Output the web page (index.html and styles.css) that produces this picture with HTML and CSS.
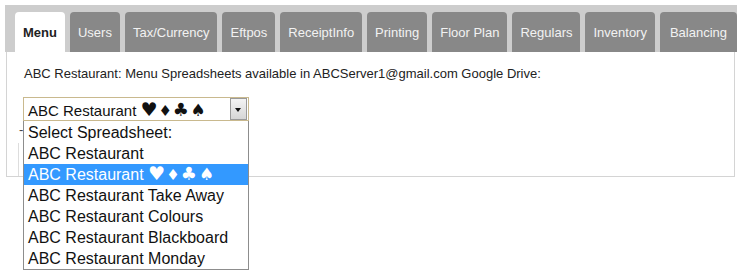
FILE: index.html
```html
<html>
<head>
  <meta charset="utf-8">
  <link rel="stylesheet" href="styles.css">
</head>
<body>

<div class="tabs">
  <div class="tab-bar">
    <span class="tab active">Menu</span>
    <span class="tab">Users</span>
    <span class="tab">Tax/Currency</span>
    <span class="tab">Eftpos</span>
    <span class="tab">ReceiptInfo</span>
    <span class="tab">Printing</span>
    <span class="tab">Floor Plan</span>
    <span class="tab">Regulars</span>
    <span class="tab">Inventory</span>
    <span class="tab">Balancing</span>
  </div>

  <div class="panel">
    <p class="intro">ABC Restaurant: Menu Spreadsheets available in ABCServer1@gmail.com Google Drive:</p>

    <div class="select-wrap">
      <div class="select-box">
        <span class="select-value">ABC Restaurant <span class="suits"><span class="heart">&#9829;</span> <span class="diamond">&#9830;</span> <span class="club">&#9827;</span> <span class="spade">&#9824;</span></span></span>
        <span class="select-arrow"></span>
      </div>

      <!-- the open list lies over the rest of the panel -->
      <ul class="select-list">
        <li>Select Spreadsheet:</li>
        <li>ABC Restaurant</li>
        <li class="picked">ABC Restaurant <span class="suits"><span class="heart">&#9829;</span> <span class="diamond">&#9830;</span> <span class="club">&#9827;</span> <span class="spade">&#9824;</span></span></li>
        <li>ABC Restaurant Take Away</li>
        <li>ABC Restaurant Colours</li>
        <li>ABC Restaurant Blackboard</li>
        <li>ABC Restaurant Monday</li>
      </ul>
    </div>

    <div class="under-row">
      <span class="under-mark">-</span>
      <span class="under-btn"></span>
    </div>
  </div>
</div>

</body>
</html>
```

FILE: styles.css
```css
body {
  margin: 0;
  background: #fff;
  font-family: "Liberation Sans", Arial, sans-serif;
  font-size: 13px;
  color: #222;
}

.tabs {
  width: 732px;
  margin: 5px 0 0 5px;
}

.tab-bar {
  display: flex;
  gap: 5px;
  height: 47px;
  padding: 7px 0 0 10px;
  box-sizing: border-box;
  background: #cdcdcd;
}

.tab {
  display: flex;
  align-items: center;
  flex-shrink: 0;
  padding: 0 8px;
  white-space: nowrap;
  background: #888;
  color: #f2f2f2;
  border-radius: 4px 4px 0 0;
}

.tab:last-child {
  padding: 0 10px;
}

.tab.active {
  background: #fff;
  color: #222;
  font-weight: bold;
}

.panel {
  height: 125px;
  margin: 0 2px 0 1px;
  padding: 14px 17px 0 17px;
  box-sizing: border-box;
  border: 1px solid #d4d4d4;
  border-top: 0;
  background: #fff;
}

.intro {
  margin: 0;
  line-height: 15px;
}

.select-wrap {
  position: relative;
  width: 226px;
  margin: 16px 0 0 -1px;
  z-index: 2;
}

.select-box {
  display: flex;
  align-items: center;
  justify-content: space-between;
  height: 24px;
  padding: 0 1px 0 4px;
  box-sizing: border-box;
  border: 1px solid #c9b98e;
  background: #fff;
  font-size: 15px;
  color: #111;
}

.select-arrow {
  position: relative;
  width: 15px;
  height: 20px;
  border: 1px solid #9a9a9a;
  background: linear-gradient(#f4f4f4, #d6d6d6);
}

.select-arrow::after {
  content: "";
  position: absolute;
  left: 4px;
  top: 9px;
  border-left: 3.5px solid transparent;
  border-right: 3.5px solid transparent;
  border-top: 4px solid #111;
}

.suits {
  font-family: "DejaVu Sans", sans-serif;
  line-height: 1;
  word-spacing: -4px;
}

.heart { font-size: 19px; }
.diamond { font-size: 15px; }
.club { font-size: 18px; }
.spade { font-size: 17px; margin-left: 1px; }

.select-list {
  position: absolute;
  top: 100%;
  left: 0;
  width: 226px;
  margin: 0;
  padding: 1px 0 0 0;
  box-sizing: border-box;
  list-style: none;
  border: 1px solid #8d8d8d;
  border-top: 0;
  background: #fff;
  font-size: 16px;
  color: #111;
}

.select-list li {
  height: 21px;
  line-height: 21px;
  padding-left: 4px;
  white-space: nowrap;
}

.select-list li.picked {
  background: #3399ff;
  color: #fff;
}

.under-row {
  display: flex;
  align-items: flex-start;
  margin: 3px 0 0 -5px;
}

.under-mark {
  color: #444;
  line-height: 12px;
}

.under-btn {
  width: 60px;
  height: 33px;
  margin: 19px 0 0 -5px;
  border-left: 1px solid #ddd;
}
```
